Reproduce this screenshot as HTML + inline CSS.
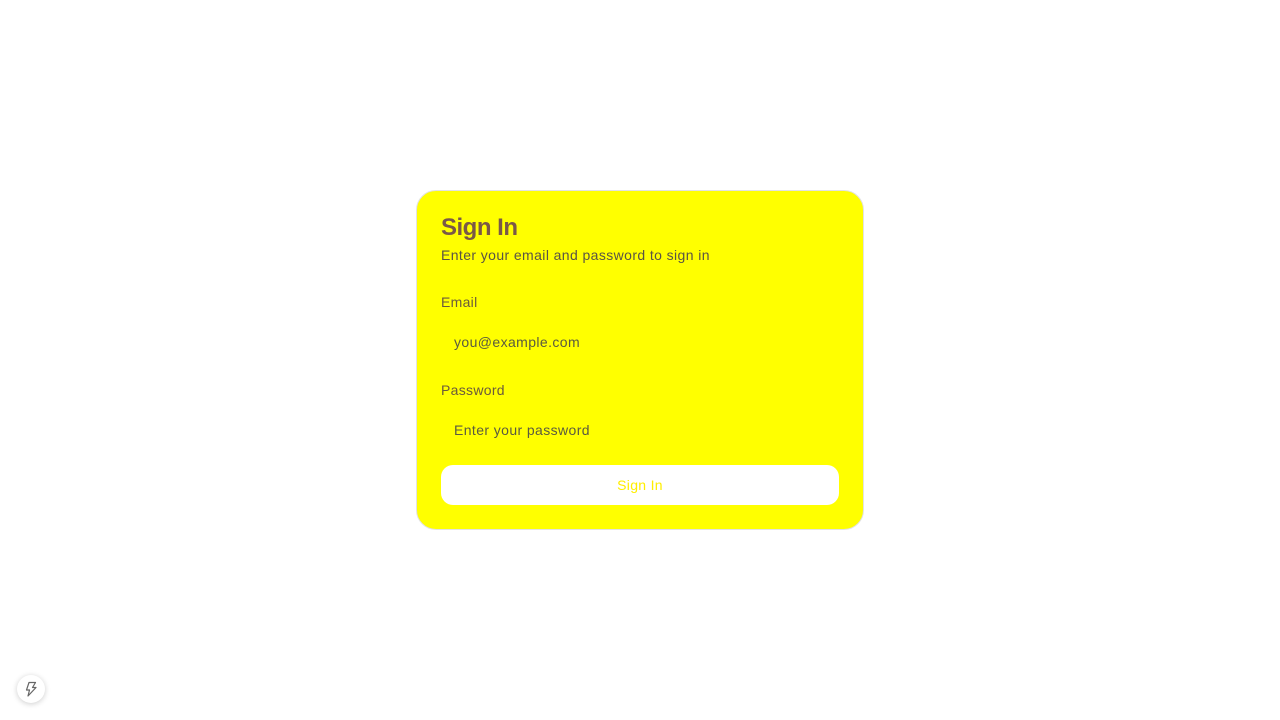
<!DOCTYPE html>
<html><head><meta charset="utf-8"><style>
html,body{margin:0;padding:0;background:#fff;width:1280px;height:720px;overflow:hidden;font-family:"Liberation Sans",sans-serif;}
.card{position:absolute;left:416px;top:190px;width:446px;height:338px;background:#ffff00;border:1px solid #e2e2e2;border-radius:20px;}
.t{position:absolute;left:24px;top:23px;font-size:24px;font-weight:bold;color:#7a5848;letter-spacing:-0.5px;}
.s{position:absolute;left:24px;top:56px;font-size:14px;color:#5a5445;letter-spacing:0.4px;}
.l{position:absolute;left:24px;font-size:14px;color:#6b5a3c;letter-spacing:0.3px;}
.p{position:absolute;left:37px;font-size:14px;color:#5a5a40;letter-spacing:0.4px;}
.b{position:absolute;left:24px;top:274px;width:398px;height:40px;background:#fff;border-radius:12px;color:#ffee00;font-size:14px;text-align:center;line-height:40px;letter-spacing:0.3px;}
.ic{position:absolute;left:17px;top:675px;width:28px;height:28px;border-radius:50%;background:#fff;box-shadow:0 1px 6px rgba(0,0,0,.2);}
</style></head><body>
<div class="card">
<div class="t">Sign In</div>
<div class="s">Enter your email and password to sign in</div>
<div class="l" style="top:103px">Email</div>
<div class="p" style="top:143px">you@example.com</div>
<div class="l" style="top:191px">Password</div>
<div class="p" style="top:231px">Enter your password</div>
<div class="b">Sign In</div>
</div>
<div class="ic"><svg width="28" height="28" viewBox="0 0 28 28"><path d="M12 7.5 L18.5 7.5 L15.5 12.5 L19 12.5 L11 21 L12.5 15 L9.5 15 Z" fill="none" stroke="#666" stroke-width="1.2" stroke-linejoin="round"/></svg></div>
</body></html>
